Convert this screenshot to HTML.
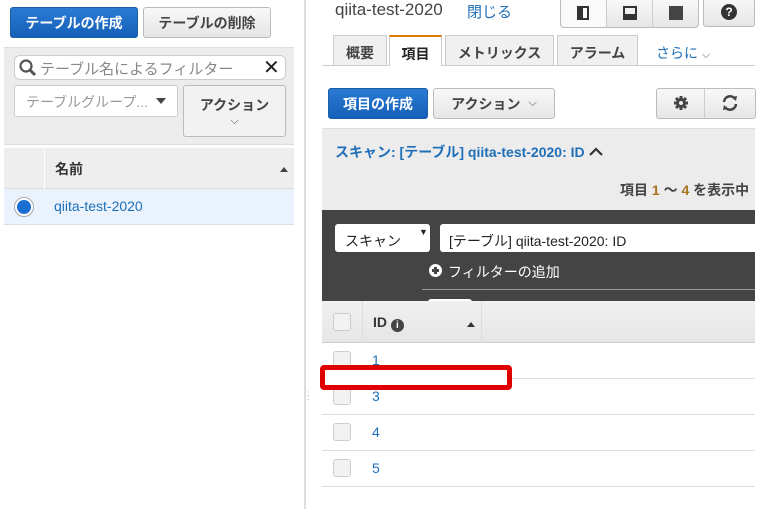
<!DOCTYPE html>
<html><head><meta charset="utf-8"><style>
*{box-sizing:border-box;margin:0;padding:0}
body{width:763px;height:509px;overflow:hidden;background:#fff;position:relative;font-family:"Liberation Sans","Noto Sans CJK JP",sans-serif;font-size:14px;color:#333}
.a{position:absolute}
.btn{position:absolute;border:1px solid #bbb;border-radius:3px;background:linear-gradient(#f8f8f8,#e6e6e6);font-weight:bold;color:#444;display:flex;align-items:center;justify-content:center;font-size:14px}
.pri{background:linear-gradient(#2a7ad3,#1560b8);border-color:#1a5ea8;color:#fff}
.link{color:#1f6fb8}
.cb{position:absolute;width:18px;height:18px;border:1px solid #ccc;border-radius:3px;background:#f2f2f2;left:333px}
.row{position:absolute;left:322px;width:433px;border-bottom:1px solid #ddd}
</style></head><body>
<!-- left -->
<div class="btn pri" style="left:10px;top:7px;width:128px;height:31px">テーブルの作成</div>
<div class="btn" style="left:143px;top:7px;width:128px;height:31px">テーブルの削除</div>
<div class="a" style="left:4px;top:47px;width:290px;height:98px;background:#ececec;border-top:1px solid #ddd;border-bottom:1px solid #ddd"></div>
<div class="a" style="left:14px;top:55px;width:272px;height:25px;background:#fff;border:1px solid #ccc;border-radius:6px"></div>
<svg class="a" style="left:18px;top:58px" width="20" height="20" viewBox="0 0 20 20"><circle cx="8" cy="8" r="5.5" fill="none" stroke="#555" stroke-width="2.2"/><path d="M12 12l5 5" stroke="#555" stroke-width="3"/></svg>
<div class="a" style="left:40px;top:58px;font-size:15px;color:#888">テーブル名によるフィルター</div>
<div class="a" style="left:263px;top:55px;font-size:20px;color:#222">✕</div>
<div class="a" style="left:14px;top:85px;width:164px;height:32px;background:#fff;border:1px solid #ccc;border-radius:3px"></div>
<div class="a" style="left:26px;top:92px;font-size:14px;color:#999">テーブルグループ...</div>
<div class="a" style="left:156px;top:98px;border:5px solid transparent;border-top:6px solid #444"></div>
<div class="btn" style="left:183px;top:85px;width:103px;height:52px;flex-direction:column;background:#f2f2f2"><span>アクション</span><span style="font-size:11px;font-weight:normal">⌵</span></div>
<div class="a" style="left:4px;top:148px;width:290px;height:41px;background:#eee;border-bottom:1px solid #ddd"></div>
<div class="a" style="left:44px;top:148px;width:1px;height:41px;background:#fff"></div>
<div class="a" style="left:55px;top:159px;font-weight:bold;font-size:14px">名前</div>
<div class="a" style="left:280px;top:163px;border:4px solid transparent;border-bottom:5px solid #444"></div>
<div class="a" style="left:4px;top:189px;width:290px;height:36px;background:#eaf3fd;border-bottom:1px solid #ddd"></div>
<div class="a" style="left:14px;top:197px;width:20px;height:20px;border-radius:50%;border:1px solid #aaa;background:#fff"></div>
<div class="a" style="left:17px;top:200px;width:14px;height:14px;border-radius:50%;background:#1a6fd0"></div>
<div class="a link" style="left:54px;top:198px;font-size:14px">qiita-test-2020</div>
<div class="a" style="left:304px;top:0;width:2px;height:509px;background:#ddd"></div>
<div class="a" style="left:307px;top:392px;font-size:8px;color:#999;line-height:4px">:<br>:</div>
<!-- right -->
<div class="a" style="left:335px;top:0px;font-size:17px;color:#444">qiita-test-2020</div>
<div class="a link" style="left:467px;top:1px;font-size:15px">閉じる</div>
<div class="a" style="left:560px;top:0;width:139px;height:28px;border:1px solid #bbb;border-top:none;border-radius:0 0 4px 4px;background:linear-gradient(#f8f8f8,#e6e6e6)"></div>
<div class="a" style="left:560px;top:0;width:46px;height:28px;background:#fafafa;border-left:1px solid #bbb;border-bottom:1px solid #bbb;border-radius:0 0 0 4px"></div>
<div class="a" style="left:606px;top:0;width:1px;height:27px;background:#ccc"></div>
<div class="a" style="left:652px;top:0;width:1px;height:27px;background:#ccc"></div>
<div class="a" style="left:577px;top:6px;width:12px;height:14px;border:2px solid #333;border-left-width:6px"></div>
<div class="a" style="left:623px;top:6px;width:14px;height:14px;border:2px solid #333;border-bottom-width:6px"></div>
<div class="a" style="left:669px;top:6px;width:14px;height:14px;background:#444"></div>
<div class="btn" style="left:703px;top:-3px;width:52px;height:30px"><span style="display:inline-block;width:16px;height:16px;border-radius:50%;background:#333;color:#fff;font-size:12px;line-height:16px;text-align:center">?</span></div>
<div class="a" style="left:322px;top:65px;width:433px;height:1px;background:#ccc"></div>
<div class="a" style="left:333px;top:35px;width:54px;height:31px;background:#f0f0f0;border:1px solid #ccc;text-align:center;padding-top:7px;font-weight:bold;color:#444">概要</div>
<div class="a" style="left:389px;top:35px;width:53px;height:31px;background:#fff;border:1px solid #ccc;border-top:2px solid #e07b00;border-bottom:none;text-align:center;padding-top:7px;font-weight:bold;color:#222">項目</div>
<div class="a" style="left:445px;top:35px;width:109px;height:31px;background:#f0f0f0;border:1px solid #ccc;text-align:center;padding-top:7px;font-weight:bold;color:#444">メトリックス</div>
<div class="a" style="left:557px;top:35px;width:81px;height:31px;background:#f0f0f0;border:1px solid #ccc;text-align:center;padding-top:7px;font-weight:bold;color:#444">アラーム</div>
<div class="a link" style="left:656px;top:43px;font-size:14px">さらに <span style="color:#555;font-size:11px">⌵</span></div>
<div class="btn pri" style="left:328px;top:88px;width:100px;height:31px">項目の作成</div>
<div class="btn" style="left:433px;top:88px;width:122px;height:31px">アクション <span style="font-size:11px;font-weight:normal;margin-left:8px">⌵</span></div>
<div class="btn" style="left:656px;top:88px;width:100px;height:31px"></div>
<div class="a" style="left:704px;top:89px;width:1px;height:29px;background:#ccc"></div>
<svg class="a" style="left:673px;top:95px" width="16" height="16" viewBox="0 0 16 16"><circle cx="8" cy="8" r="5" fill="#444"/><path d="M8 1v14M1 8h14M3 3l10 10M13 3L3 13" stroke="#444" stroke-width="3"/><circle cx="8" cy="8" r="2" fill="#eee"/></svg>
<svg class="a" style="left:720px;top:94px" width="20" height="18" viewBox="0 0 20 18"><path d="M4 8a6 6 0 0 1 11-3M16 10a6 6 0 0 1-11 3" fill="none" stroke="#444" stroke-width="2.5"/><path d="M12 3l5-1-1 5zM8 15l-5 1 1-5z" fill="#444"/></svg>
<div class="a" style="left:322px;top:128px;width:433px;height:82px;background:#ececec;border-top:1px solid #ddd"></div>
<div class="a link" style="left:335px;top:142px;font-weight:bold;font-size:14px">スキャン: [テーブル] qiita-test-2020: ID</div>
<svg class="a" style="left:588px;top:145px" width="16" height="12" viewBox="0 0 16 12"><path d="M2 10l6-6 6 6" fill="none" stroke="#333" stroke-width="2.2"/></svg>
<div class="a" style="left:620px;top:180px;font-weight:bold;font-size:14px;color:#444">項目 <span style="color:#a8731f">1</span> 〜 <span style="color:#a8731f">4</span> を表示中</div>
<div class="a" style="left:322px;top:210px;width:433px;height:91px;background:#444"></div>
<div class="a" style="left:335px;top:224px;width:95px;height:28px;background:#fff;border-radius:3px;padding:7px 0 0 10px;font-size:14px;color:#222">スキャン<span style="position:absolute;left:84px;top:3px;font-size:9px">▼</span></div>
<div class="a" style="left:440px;top:224px;width:315px;height:28px;background:#fff;border-radius:3px 0 0 3px;padding:7px 0 0 9px;font-size:14px;color:#222;overflow:hidden">[テーブル] qiita-test-2020: ID</div>
<div class="a" style="left:429px;top:264px;width:13px;height:13px;border-radius:50%;background:#fff"></div>
<div class="a" style="left:432px;top:269px;width:7px;height:3px;background:#444"></div>
<div class="a" style="left:434px;top:267px;width:3px;height:7px;background:#444"></div>
<div class="a" style="left:448px;top:262px;font-size:14px;color:#fff">フィルターの追加</div>
<div class="a" style="left:422px;top:289px;width:333px;height:1px;background:#999"></div>
<div class="a" style="left:428px;top:299px;width:44px;height:3px;background:#fff;border-radius:3px 3px 0 0"></div>
<div class="a" style="left:322px;top:301px;width:433px;height:42px;background:linear-gradient(#f0f0f0,#e6e6e6);border-bottom:1px solid #ccc"></div>
<div class="a" style="left:362px;top:301px;width:1px;height:42px;background:#ddd"></div>
<div class="a" style="left:481px;top:301px;width:1px;height:42px;background:#ddd"></div>
<div class="cb" style="top:313px"></div>
<div class="a" style="left:373px;top:314px;font-weight:bold;font-size:14px;color:#333">ID <span style="display:inline-block;width:13px;height:13px;border-radius:50%;background:#444;color:#fff;font-size:10px;line-height:13px;text-align:center;vertical-align:-1px">i</span></div>
<div class="a" style="left:467px;top:318px;border:4px solid transparent;border-bottom:5px solid #333"></div>
<div class="row" style="top:343px;height:36px"></div>
<div class="row" style="top:379px;height:36px"></div>
<div class="row" style="top:415px;height:36px"></div>
<div class="row" style="top:451px;height:36px"></div>
<div class="cb" style="top:351px"></div><div class="a link" style="left:372px;top:352px">1</div>
<div class="cb" style="top:387px"></div><div class="a link" style="left:372px;top:388px">3</div>
<div class="cb" style="top:423px"></div><div class="a link" style="left:372px;top:424px">4</div>
<div class="cb" style="top:459px"></div><div class="a link" style="left:372px;top:460px">5</div>
<div class="a" style="left:320px;top:365px;width:192px;height:25px;border:5px solid #e00000;border-radius:4px;background:#fff"></div>
</body></html>
